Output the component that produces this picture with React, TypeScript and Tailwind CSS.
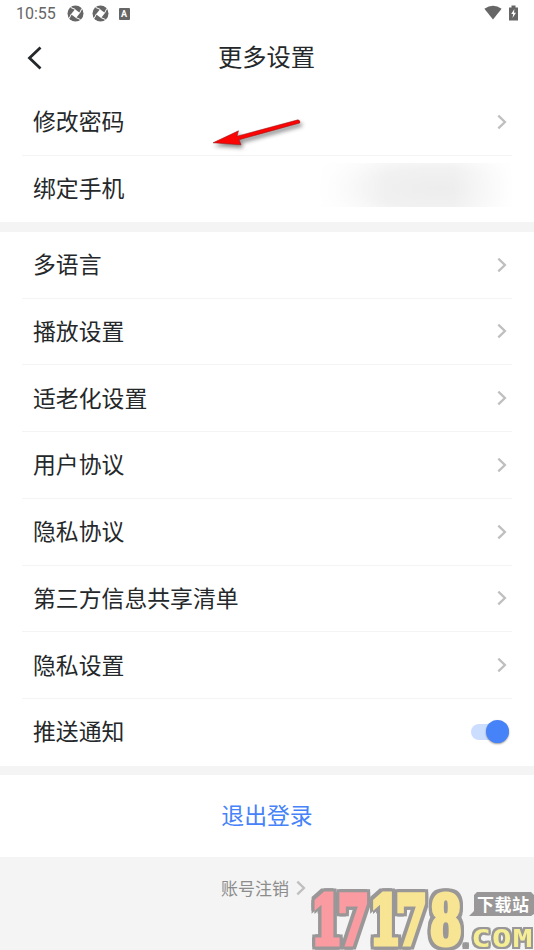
import React from "react";

const Chevron = ({ className = "" }: { className?: string }) => (
  <svg width="10" height="16" viewBox="0 0 10 16" fill="none" stroke="#bfbfbf" strokeWidth="2.3" className={className}>
    <path d="M1.3 1.7 L7.9 8 L1.3 14.3" />
  </svg>
);

function Row({ label, last, children }: { label: string; last?: boolean; children?: React.ReactNode }) {
  return (
    <div className="h-[66.75px] pl-[22px] pr-[22px]">
      <div className={`flex h-full items-center justify-between border-b pl-[11px] ${last ? "border-transparent" : "border-[#f4f4f4]"}`}>
        <span className="mb-[3px] text-[22.85px] leading-[32px] text-[#25282a]">{label}</span>
        {children ?? <Chevron className="mr-[5px]" />}
      </div>
    </div>
  );
}

const Shutter = () => (
  <svg width="17" height="17" viewBox="0 0 17 17">
    <circle cx="8.5" cy="8.5" r="8" fill="#666" />
    <path d="M8 4.2L13 8L9 13L4 9.2Z" fill="#fff" />
    <path d="M8.2 4.4L3.6 2.4M12.6 8L14.8 3.6M9 12.6L13.6 14.6M4.4 9L2.2 13.4" stroke="#fff" strokeWidth="1" />
  </svg>
);

function Watermark() {
  return (
    <svg className="absolute bottom-0 right-0" width="226" height="64" viewBox="308 886 226 64">
      <g
        className="[filter:drop-shadow(3px_0_0_#999797)_drop-shadow(-3px_0_0_#999797)_drop-shadow(0_3px_0_#999797)_drop-shadow(0_-3px_0_#999797)]"
        fontFamily="'DejaVu Serif','Liberation Serif',serif"
        fontWeight="700"
        fontSize="67"
        strokeWidth="5"
        strokeLinejoin="miter"
      >
        <g transform="scale(0.68 1)">
          <text x="457 496.5" y="944" fill="#f99ba1" stroke="#f99ba1">17</text>
          <text x="543 581.5 632.5" y="944" fill="#f8e594" stroke="#f8e594">178</text>
        </g>
      </g>
      <path d="M477 892H531L534 895V914L531 916H469L474 911V895Z" fill="#999797" />
      <text x="477" y="911" fontSize="17" fontWeight="700" fontFamily="'Noto Sans CJK SC',sans-serif" fill="#fff" textLength="52">下载站</text>
      <g
        className="[filter:drop-shadow(2px_0_0_#999797)_drop-shadow(-2px_0_0_#999797)_drop-shadow(0_2px_0_#999797)_drop-shadow(0_-2px_0_#999797)]"
        fontFamily="'DejaVu Sans Mono',monospace"
        fontWeight="700"
        fontSize="25"
      >
        <text x="461.5" y="947" fontSize="14" fill="#999797">.</text>
        <g transform="scale(1.3 1)">
          <text x="362.5 378.5 394.5" y="947" fill="#f6ee94">COM</text>
        </g>
      </g>
    </svg>
  );
}

export default function App() {
  return (
    <div className="relative flex h-[950px] w-[534px] flex-col overflow-hidden bg-[#f4f4f4] font-['Noto_Sans_CJK_SC',sans-serif]">
      <header className="bg-white">
        <div className="flex h-[28px] items-center justify-between pl-[16px] pr-[16px] font-['Roboto',sans-serif] text-[16px] text-[#666]">
          <div className="flex items-center">
            <span className="w-[51px]">10:55</span>
            <div className="mb-[1px] flex gap-[7.5px]">
              <Shutter />
              <Shutter />
            </div>
            <span className="ml-[10px] flex h-[12px] w-[11px] items-center justify-center rounded-[1px] bg-[#666] text-[9px] font-bold leading-none text-white">A</span>
          </div>
          <div className="mb-[3px] flex items-center">
            <svg width="18" height="15" viewBox="0 0 18 15"><path d="M0.4 3.8Q9-2.5 17.6 3.8L9 14.5Z" fill="#666" /></svg>
            <svg className="ml-[7px]" width="9" height="16" viewBox="0 0 9 16"><path d="M0 2.5H2.5V.5H6.5V2.5H9V15.5H0Z" fill="#666" /><path d="M5.4 4L2.2 9H4.2L3.5 13L7 7.7H5Z" fill="#fff" /></svg>
          </div>
        </div>
        <div className="grid h-[60px] grid-cols-[60px_1fr_60px] items-center text-[#25282a]">
          <svg className="ml-[27px]" width="16" height="24" viewBox="0 0 16 24" fill="none" stroke="currentColor" strokeWidth="2.8"><path d="M13.5 1.5L2.5 12L13.5 22.5" /></svg>
          <h1 className="mb-[3px] mr-[1px] text-center text-[24.3px] font-normal">更多设置</h1>
        </div>
      </header>
      <section className="bg-white pt-[0.75px]">
        <Row label="修改密码" />
        <Row label="绑定手机" last>
          <div className="mb-[6px] mr-[-6px] h-[44px] w-[202px] bg-[linear-gradient(to_right,#fff_0%,#fff0_35%,#fff0_68%,#fff_98%),radial-gradient(ellipse_90%_110%_at_60%_58%,#ededed_0%,#f1f1f1_40%,#fafafa_70%,#fff_100%)]" />
        </Row>
      </section>
      <section className="mt-[9.5px] bg-white">
        <Row label="多语言" />
        <Row label="播放设置" />
        <Row label="适老化设置" />
        <Row label="用户协议" />
        <Row label="隐私协议" />
        <Row label="第三方信息共享清单" />
        <Row label="隐私设置" />
        <Row label="推送通知" last>
          <div className="mr-[3px] flex h-[16px] w-[38px] items-center justify-end rounded-full bg-[#ccdeff]">
            <span className="h-[23px] w-[23px] shrink-0 rounded-full bg-[#4682f8] shadow-[0_1px_2px_#0006]" />
          </div>
        </Row>
      </section>
      <button className="mt-[9px] h-[82.5px] bg-white pb-[3px] text-[22.85px] text-[#4682f8]">退出登录</button>
      <div className="flex h-[62px] items-center justify-center gap-[7px] pr-[7px] text-[17px] text-[#8c8c8c]">
        <span className="mb-[1px]">账号注销</span>
        <Chevron />
      </div>
      <Watermark />
      <svg className="absolute left-[208px] top-[112px] drop-shadow-[2px_3px_2px_#0007]" width="98" height="42" viewBox="208 112 98 42">
        <path d="M213 142.8L238.5 130.8L237 136.2L298 119.8Q300.5 120.5 299.8 123L239 139.8L241 144.8Z" fill="#fa0404" stroke="#8a1515" strokeWidth="0.5" />
      </svg>
    </div>
  );
}
